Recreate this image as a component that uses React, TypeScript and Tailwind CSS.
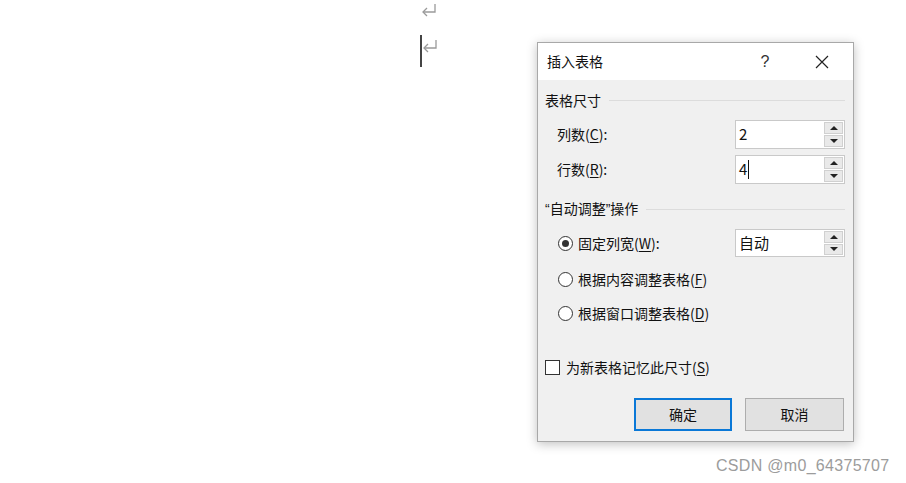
import { ReactNode } from 'react'

const cjk = { fontFamily: '"Noto Sans CJK SC", "Noto Sans", sans-serif' }
const latin = { fontFamily: '"Liberation Sans", Arial, sans-serif' }

function ReturnMark() {
    return (
        <svg width="18" height="16" viewBox="0 0 18 16" fill="none" stroke="#9a9a9a" strokeWidth="1.3">
            <path d="M15 2 V10 H3" />
            <path d="M7 6 L3 10 L7 14" />
        </svg>
    )
}

function U({ children }: { children: ReactNode }) {
    return <span className="underline underline-offset-2">{children}</span>
}

function Spin() {
    return (
        <div className="flex flex-col w-[20px] h-full py-[1px] pr-[1px] gap-[1px]">
            <div className="flex-1 flex items-center justify-center bg-[#e9e9e9] border border-[#d0d0d0]">
                <div className="w-0 h-0 border-l-[4px] border-r-[4px] border-b-[4px] border-l-transparent border-r-transparent border-b-[#222]" />
            </div>
            <div className="flex-1 flex items-center justify-center bg-[#e9e9e9] border border-[#d0d0d0]">
                <div className="w-0 h-0 border-l-[4px] border-r-[4px] border-t-[4px] border-l-transparent border-r-transparent border-t-[#222]" />
            </div>
        </div>
    )
}

function SpinBox({ value, caret, h }: { value: string; caret?: boolean; h: string }) {
    return (
        <div className={`flex w-[110px] ${h} bg-white border border-[#c9c9c9]`}>
            <div className="flex-1 flex items-center pl-[3px] text-[15px] text-[#111]">
                {value}
                {caret && <span className="inline-block w-[1px] h-[19px] bg-[#111] ml-[1px]" />}
            </div>
            <Spin />
        </div>
    )
}

function Heading({ children }: { children: ReactNode }) {
    return (
        <div className="flex items-center h-[20px] pl-[7px] pr-[8px]">
            <span className="text-[14px] text-[#111] whitespace-nowrap">{children}</span>
            <div className="flex-1 h-[1px] bg-[#dcdcdc] ml-[8px]" />
        </div>
    )
}

function Radio({ checked }: { checked?: boolean }) {
    return (
        <div className="w-[15px] h-[15px] rounded-full border border-[#333] bg-white flex items-center justify-center">
            {checked && <div className="w-[7px] h-[7px] rounded-full bg-[#333]" />}
        </div>
    )
}

export default function App() {
    return (
        <div className="relative w-[906px] h-[483px] bg-white overflow-hidden" style={cjk}>
            {/* document marks */}
            <div className="absolute left-[420px] top-[2px]">
                <ReturnMark />
            </div>
            <div className="absolute left-[420px] top-[35px] w-[1.5px] h-[32px] bg-[#444]" />
            <div className="absolute left-[421px] top-[38px]">
                <ReturnMark />
            </div>

            {/* dialog */}
            <div className="absolute left-[537px] top-[42px] w-[317px] h-[400px] border border-[#a8a8a8] bg-[#f0f0f0] shadow-[0_2px_10px_rgba(0,0,0,0.25)] flex flex-col text-[#111]">
                <div className="h-[37px] bg-white flex items-center shrink-0">
                    <span className="pl-[9px] text-[14px] flex-1">插入表格</span>
                    <span className="w-[20px] text-center text-[16px] text-[#333] mr-[40px]" style={latin}>?</span>
                    <svg width="14" height="14" viewBox="0 0 14 14" stroke="#222" strokeWidth="1.2" className="mr-[24px]">
                        <path d="M1 1 L13 13 M13 1 L1 13" />
                    </svg>
                </div>

                <div className="flex flex-col pt-[10px]">
                    <Heading>表格尺寸</Heading>

                    <div className="flex items-center h-[29px] mt-[10px] pl-[19px] pr-[8px]">
                        <span className="flex-1 text-[14px]">列数(<U>C</U>):</span>
                        <SpinBox value="2" h="h-[29px]" />
                    </div>
                    <div className="flex items-center h-[29px] mt-[6px] pl-[19px] pr-[8px]">
                        <span className="flex-1 text-[14px]">行数(<U>R</U>):</span>
                        <SpinBox value="4" caret h="h-[29px]" />
                    </div>

                    <div className="mt-[15px]">
                        <Heading>
                            <span style={latin}>“</span>自动调整<span style={latin}>”</span>操作
                        </Heading>
                    </div>

                    <div className="flex items-center h-[28px] mt-[10px] pl-[20px] pr-[8px]">
                        <Radio checked />
                        <span className="flex-1 text-[14px] ml-[5px]">固定列宽(<U>W</U>):</span>
                        <SpinBox value="自动" h="h-[28px]" />
                    </div>
                    <div className="flex items-center h-[20px] mt-[12px] pl-[20px]">
                        <Radio />
                        <span className="text-[14px] ml-[5px]">根据内容调整表格(<U>F</U>)</span>
                    </div>
                    <div className="flex items-center h-[20px] mt-[14px] pl-[20px]">
                        <Radio />
                        <span className="text-[14px] ml-[5px]">根据窗口调整表格(<U>D</U>)</span>
                    </div>

                    <div className="flex items-center h-[20px] mt-[34px] pl-[7px]">
                        <div className="w-[15px] h-[15px] border border-[#333] bg-white" />
                        <span className="text-[14px] ml-[6px]">为新表格记忆此尺寸(<U>S</U>)</span>
                    </div>

                    <div className="flex justify-end gap-[13px] mt-[21px] pr-[9px]">
                        <button className="w-[98px] h-[33px] bg-[#e1e1e1] border-2 border-[#0a78d7] text-[14px] text-[#111]">确定</button>
                        <button className="w-[99px] h-[33px] bg-[#e1e1e1] border border-[#adadad] text-[14px] text-[#111]">取消</button>
                    </div>
                </div>
            </div>

            {/* watermark */}
            <div className="absolute left-[716px] top-[454px] text-[16px] text-[#9c9c9c] tracking-[0.3px]" style={latin}>
                CSDN @m0_64375707
            </div>
        </div>
    )
}
